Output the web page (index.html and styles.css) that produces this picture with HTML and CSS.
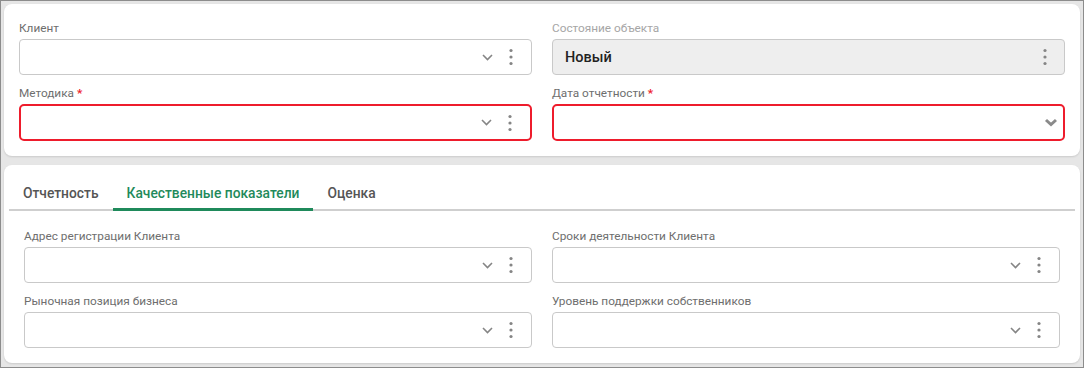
FILE: index.html
```html
<!DOCTYPE html>
<html lang="ru">
  <head>
    <meta charset="UTF-8" />
    <title>Карточка клиента</title>
    <link rel="stylesheet" href="styles.css">
  </head>
  <body>
    <div class="frame">
      <section class="card card-main">
        <div class="grid">
          <div class="field">
            <label class="field-label">Клиент</label>
            <div class="input">
              <span class="input-value"></span>
              <span class="input-icons">
                <svg class="chevron" width="11" height="7" viewBox="0 0 11 7"><path d="M1 1l4.5 4.5L10 1" /></svg>
                <svg class="dots" width="4" height="18" viewBox="0 0 4 18"><circle cx="2" cy="2.5" r="1.6" /><circle cx="2" cy="9" r="1.6" /><circle cx="2" cy="15.5" r="1.6" /></svg>
              </span>
            </div>
          </div>
          <div class="field">
            <label class="field-label disabled">Состояние объекта</label>
            <div class="input input-disabled">
              <span class="input-value">Новый</span>
              <span class="input-icons">
                <svg class="dots" width="4" height="18" viewBox="0 0 4 18"><circle cx="2" cy="2.5" r="1.6" /><circle cx="2" cy="9" r="1.6" /><circle cx="2" cy="15.5" r="1.6" /></svg>
              </span>
            </div>
          </div>
          <div class="field">
            <label class="field-label">Методика <span class="req">*</span></label>
            <div class="input input-error">
              <span class="input-value"></span>
              <span class="input-icons">
                <svg class="chevron" width="11" height="7" viewBox="0 0 11 7"><path d="M1 1l4.5 4.5L10 1" /></svg>
                <svg class="dots" width="4" height="18" viewBox="0 0 4 18"><circle cx="2" cy="2.5" r="1.6" /><circle cx="2" cy="9" r="1.6" /><circle cx="2" cy="15.5" r="1.6" /></svg>
              </span>
            </div>
          </div>
          <div class="field">
            <label class="field-label">Дата отчетности <span class="req">*</span></label>
            <div class="input input-error input-date">
              <span class="input-value"></span>
              <span class="input-icons">
                <svg class="chevron-bold" width="14" height="9" viewBox="0 0 14 9"><path d="M2 2l5 4.5L12 2" /></svg>
              </span>
            </div>
          </div>
        </div>
      </section>

      <section class="card card-tabs">
        <nav class="tabs">
          <a class="tab">Отчетность</a>
          <a class="tab active">Качественные показатели</a>
          <a class="tab">Оценка</a>
        </nav>
        <div class="pane grid">
          <div class="field">
            <label class="field-label">Адрес регистрации Клиента</label>
            <div class="input">
              <span class="input-value"></span>
              <span class="input-icons">
                <svg class="chevron" width="11" height="7" viewBox="0 0 11 7"><path d="M1 1l4.5 4.5L10 1" /></svg>
                <svg class="dots" width="4" height="18" viewBox="0 0 4 18"><circle cx="2" cy="2.5" r="1.6" /><circle cx="2" cy="9" r="1.6" /><circle cx="2" cy="15.5" r="1.6" /></svg>
              </span>
            </div>
          </div>
          <div class="field">
            <label class="field-label">Сроки деятельности Клиента</label>
            <div class="input">
              <span class="input-value"></span>
              <span class="input-icons">
                <svg class="chevron" width="11" height="7" viewBox="0 0 11 7"><path d="M1 1l4.5 4.5L10 1" /></svg>
                <svg class="dots" width="4" height="18" viewBox="0 0 4 18"><circle cx="2" cy="2.5" r="1.6" /><circle cx="2" cy="9" r="1.6" /><circle cx="2" cy="15.5" r="1.6" /></svg>
              </span>
            </div>
          </div>
          <div class="field">
            <label class="field-label">Рыночная позиция бизнеса</label>
            <div class="input">
              <span class="input-value"></span>
              <span class="input-icons">
                <svg class="chevron" width="11" height="7" viewBox="0 0 11 7"><path d="M1 1l4.5 4.5L10 1" /></svg>
                <svg class="dots" width="4" height="18" viewBox="0 0 4 18"><circle cx="2" cy="2.5" r="1.6" /><circle cx="2" cy="9" r="1.6" /><circle cx="2" cy="15.5" r="1.6" /></svg>
              </span>
            </div>
          </div>
          <div class="field">
            <label class="field-label">Уровень поддержки собственников</label>
            <div class="input">
              <span class="input-value"></span>
              <span class="input-icons">
                <svg class="chevron" width="11" height="7" viewBox="0 0 11 7"><path d="M1 1l4.5 4.5L10 1" /></svg>
                <svg class="dots" width="4" height="18" viewBox="0 0 4 18"><circle cx="2" cy="2.5" r="1.6" /><circle cx="2" cy="9" r="1.6" /><circle cx="2" cy="15.5" r="1.6" /></svg>
              </span>
            </div>
          </div>
        </div>
      </section>
    </div>
  </body>
</html>
```

FILE: styles.css
```css
:root {
  --page-bg: #e6e6e6;
  --border: #c9c9c9;
  --label: #6e6e6e;
  --label-disabled: #a6a6a6;
  --error: #ee1c2c;
  --green: #1f8a5b;
  --icon: #858585;
}
* { box-sizing: border-box; margin: 0; padding: 0; }
html, body { height: 100%; }
body { font-family: Roboto, "Noto Sans", sans-serif; color: #333; background: #fff; }

.frame { height: 368px; border: 1px solid #8c8c8c; background: var(--page-bg); padding: 3px 3px 0; display: flex; flex-direction: column; gap: 9px; }
.card { background: #fff; border-radius: 8px; box-shadow: 0 1px 2px rgba(0, 0, 0, 0.12); }
.card-main { padding: 16px 15px 15px; }
.card-tabs { padding: 5px; }

.grid { display: grid; grid-template-columns: 1fr 1fr; column-gap: 20px; row-gap: 10px; }
.field-label { display: block; font-size: 11.8px; line-height: 16px; color: var(--label); margin-bottom: 3px; }
.field-label.disabled { color: var(--label-disabled); }
.req { color: var(--error); font-weight: 700; }

.input { height: 36px; border: 1px solid var(--border); border-radius: 4px; background: #fff; display: flex; align-items: center; padding: 0 18px 0 12px; }
.input-value { flex: 1; font-size: 14.5px; font-weight: 500; color: #222; }
.input-icons { display: flex; align-items: center; gap: 16px; }
.input-disabled { background: #eeeeee; padding-right: 17px; }
.input-error { height: 37px; border: 2px solid var(--error); border-radius: 5px; }
.input-date { padding-right: 5px; }

.chevron path { fill: none; stroke: var(--icon); stroke-width: 1.6; }
.chevron-bold path { fill: none; stroke: #8a8a8a; stroke-width: 3; }
.dots circle { fill: var(--icon); }

.tabs { display: flex; border-bottom: 2px solid #cfcfcf; }
.tab { padding: 13px 14px 6px; font-size: 13.8px; line-height: 20px; font-weight: 500; color: #555; text-decoration: none; }
.tab.active { color: var(--green); border-bottom: 3px solid var(--green); margin-bottom: -2px; padding-bottom: 5px; }
.pane { padding: 17px 15px 10px; }
```
